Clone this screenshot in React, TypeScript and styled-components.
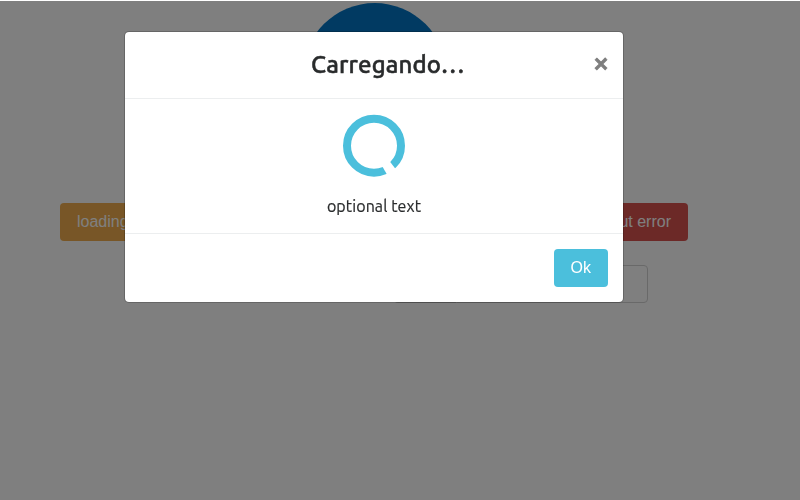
import React from "react";
import styled, { createGlobalStyle } from "styled-components";

const Global = createGlobalStyle`
  *, *::before, *::after { box-sizing: border-box; }
  html, body { margin: 0; height: 100%; overflow: hidden; }
  body { background: #fff; color: #292b2c; font: 16px/24px "Liberation Sans", Arial, sans-serif; }
`;

const Page = styled.main`
  width: 748px;
  height: 500px;
  padding-top: 3px;
  display: flex;
  flex-direction: column;
  align-items: center;
`;

const Logo = styled.svg`
  display: block;
  width: 150px;
  height: 148px;
  margin-bottom: 52px;
`;

const Row = styled.div`
  width: 628px;
  display: flex;
  justify-content: space-between;
`;

const Button = styled.button<{ $color: string }>`
  height: 38px;
  padding: 0 17px;
  border: 0;
  border-radius: 4px;
  background: ${(p) => p.$color};
  color: #fff;
  font: 16px/36px "Liberation Sans", Arial, sans-serif;
`;

const FormRow = styled.div`
  width: 548px;
  margin-top: 24px;
  display: flex;
  justify-content: flex-end;
`;

const Addon = styled.button`
  width: 62px;
  height: 38px;
  border: 1px solid #c4c4c4;
  border-right: 0;
  border-radius: 4px 0 0 4px;
  background: #eceeef;
`;

const Field = styled.input`
  width: 192px;
  height: 38px;
  border: 1px solid #d2d2d2;
  border-radius: 0 4px 4px 0;
`;

const Backdrop = styled.div`
  position: fixed;
  inset: 1px 0 0;
  background: rgba(0, 0, 0, 0.5);
`;

const Layer = styled.div`
  position: fixed;
  inset: 0;
  padding: 31px 0 0 124px;
`;

const Dialog = styled.section`
  width: 500px;
  height: 272px;
  display: flex;
  flex-direction: column;
  background: #fff;
  background-clip: padding-box;
  border: 1px solid rgba(0, 0, 0, 0.2);
  border-radius: 5px;
`;

const Header = styled.header`
  height: 67px;
  padding: 0 15px;
  display: flex;
  align-items: center;
  border-bottom: 1px solid #eceeef;
`;

const Title = styled.h4`
  flex: 1;
  margin: 0 0 0 42px;
  text-align: center;
  white-space: nowrap;
  font: 500 24px/36px Ubuntu, "Noto Sans", sans-serif;
  letter-spacing: 0.12px;
  -webkit-text-stroke: 0.5px currentColor;
`;

const Close = styled.button`
  padding: 0;
  margin-bottom: 2px;
  border: 0;
  background: none;
  color: #000;
  opacity: 0.5;
  font: 700 24px/24px "Liberation Sans", Arial, sans-serif;
  -webkit-text-stroke: 0.8px currentColor;
`;

const Body = styled.div`
  height: 135px;
  padding-top: 15px;
  display: flex;
  flex-direction: column;
  align-items: center;
  border-bottom: 1px solid #eceeef;
`;

const Spinner = styled.svg`
  display: block;
  width: 64px;
  height: 64px;
`;

const Message = styled.p`
  margin: 16px 0 0;
  white-space: nowrap;
  font: 16px/24px Ubuntu, "Noto Sans", sans-serif;
  letter-spacing: 0.1px;
  -webkit-text-stroke: 0.2px currentColor;
`;

const Footer = styled.footer`
  padding: 15px 15px 0;
  display: flex;
  justify-content: flex-end;
`;

export default function App() {
  return (
    <>
      <Global />
      <Page>
        <Logo viewBox="0 0 150 148" aria-hidden="true">
          <circle cx="75.7" cy="72" r="72" fill="#0275c4" />
        </Logo>
        <Row>
          <Button $color="#f0ad4e">loading</Button>
          <Button $color="#d9534f">without error</Button>
        </Row>
        <FormRow>
          <Addon aria-label="Send" />
          <Field aria-label="Text" />
        </FormRow>
      </Page>
      <Backdrop />
      <Layer>
        <Dialog role="dialog" aria-modal="true">
          <Header>
            <Title>Carregando…</Title>
            <Close aria-label="Close">×</Close>
          </Header>
          <Body>
            <Spinner viewBox="0 0 64 64" aria-hidden="true">
              <circle cx="32" cy="31.7" r="27" fill="none" stroke="#4bbfdc" strokeWidth="8" />
              <path d="M21-4.4 33-5.2V5.2L21 4.4Z" transform="translate(32 31.7) rotate(56.5)" fill="#fff" />
            </Spinner>
            <Message>optional text</Message>
          </Body>
          <Footer>
            <Button $color="#4bbfdc">Ok</Button>
          </Footer>
        </Dialog>
      </Layer>
    </>
  );
}
